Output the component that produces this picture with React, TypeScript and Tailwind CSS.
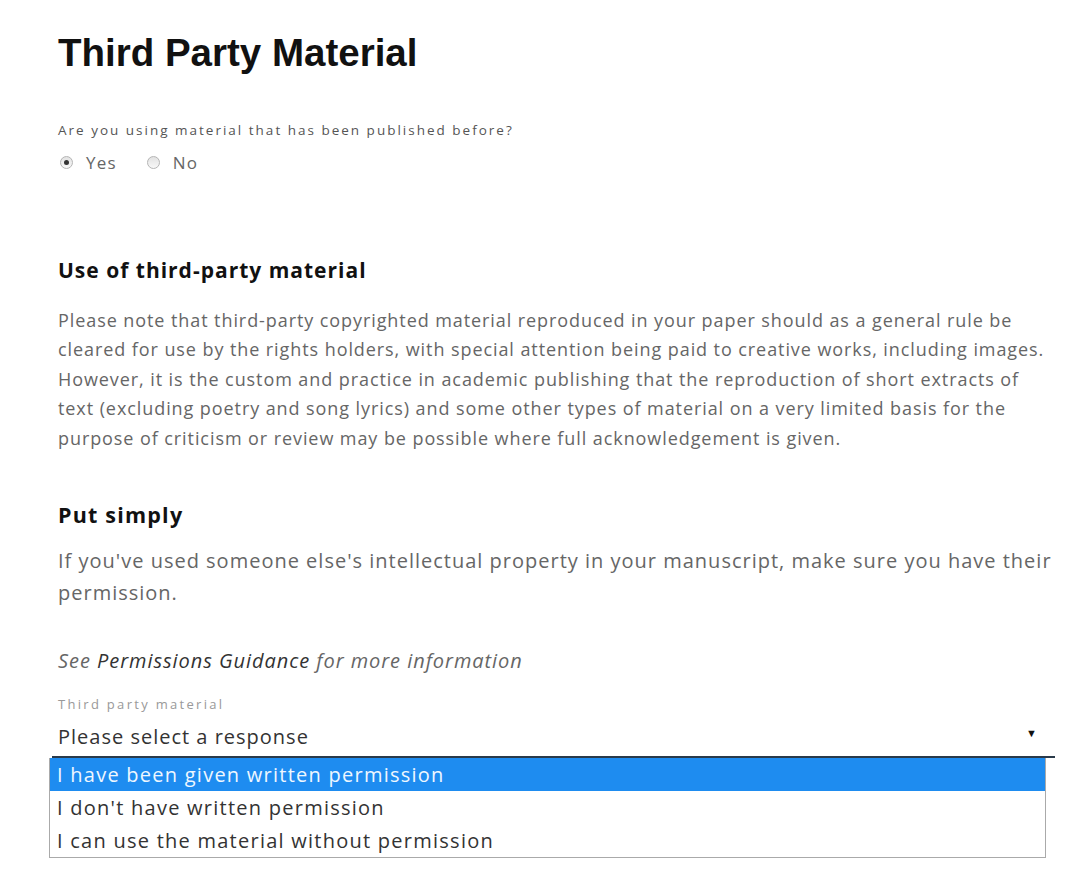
import React from "react";

const options = [
  "I have been given written permission",
  "I don't have written permission",
  "I can use the material without permission",
];

const paragraph = [
  "Please note that third-party copyrighted material reproduced in your paper should as a general rule be",
  "cleared for use by the rights holders, with special attention being paid to creative works, including images.",
  "However, it is the custom and practice in academic publishing that the reproduction of short extracts of",
  "text (excluding poetry and song lyrics) and some other types of material on a very limited basis for the",
  "purpose of criticism or review may be possible where full acknowledgement is given.",
];

function Radio({ checked, label }: { checked?: boolean; label: string }) {
  return (
    <label className="flex items-center gap-[13px]">
      <span className="flex h-[13px] w-[13px] items-center justify-center rounded-full border border-[#b5b5b5] bg-gradient-to-b from-[#e2e2e2] to-[#f8f8f8]">
        {checked && <span className="h-[5px] w-[5px] rounded-full bg-[#333]" />}
      </span>
      <span className="text-[17px] tracking-[1.2px] text-[#666]">{label}</span>
    </label>
  );
}

export default function App() {
  return (
    <div className="min-h-screen bg-white pl-[58px] pr-[24px] font-['Open_Sans',sans-serif]">
      <h1 className="pt-[31px] font-['Liberation_Sans',Arial,sans-serif] text-[38.5px] font-bold leading-[44px] text-[#111]">
        Third Party Material
      </h1>

      {/* published before */}
      <p className="mt-[46px] text-[13.5px] leading-[18px] tracking-[2px] text-[#555]">
        Are you using material that has been published before?
      </p>
      <div className="mt-[11px] flex items-center gap-[30px] pl-[2px]">
        <Radio checked label="Yes" />
        <Radio label="No" />
      </div>

      <h2 className="mt-[80px] text-[21px] font-bold leading-[28px] tracking-[1px] text-[#111]">
        Use of third-party material
      </h2>
      <p className="mt-[22px] whitespace-nowrap text-[18px] leading-[29.5px] tracking-[0.92px] text-[#666]">
        {paragraph.map((line) => (
          <span key={line} className="block">
            {line}
          </span>
        ))}
      </p>

      <h2 className="mt-[48px] text-[21.5px] font-bold leading-[28px] tracking-[1.2px] text-[#111]">Put simply</h2>
      <p className="mt-[16px] whitespace-nowrap text-[20px] leading-[32px] tracking-[1px] text-[#666]">
        If you've used someone else's intellectual property in your manuscript, make sure you have their
        <br />
        permission.
      </p>

      <p className="mt-[38px] text-[20px] italic leading-[28px] tracking-[0.95px] text-[#666]">
        See <span className="text-[#333]">Permissions Guidance</span> for more information
      </p>

      {/* select */}
      <div className="mt-[20px] pr-[1px]">
        <div className="text-[13px] leading-[18px] tracking-[2.3px] text-[#999]">Third party material</div>
        <div className="flex items-center justify-between pt-[11px] pb-[6px]">
          <span className="text-[20px] leading-[26px] tracking-[1px] text-[#333]">Please select a response</span>
          <span className="mr-[18px] -mt-[8px] text-[11px] text-[#111]">▼</span>
        </div>
        <div className="-ml-[6px] border-t-2 border-[#2a3a4a]">
          <ul className="-ml-[3px] mr-[9px] border border-t-0 border-[#aaa] bg-white">
            {options.map((o, i) => (
              <li
                key={o}
                className={
                  i === 0
                    ? "bg-[#1e8cf0] px-[7px] text-[20px] leading-[33px] tracking-[1.25px] text-[#eef7ff]"
                    : "px-[7px] text-[20px] leading-[33px] tracking-[1.25px] text-[#333]"
                }
              >
                {o}
              </li>
            ))}
          </ul>
        </div>
      </div>
    </div>
  );
}
